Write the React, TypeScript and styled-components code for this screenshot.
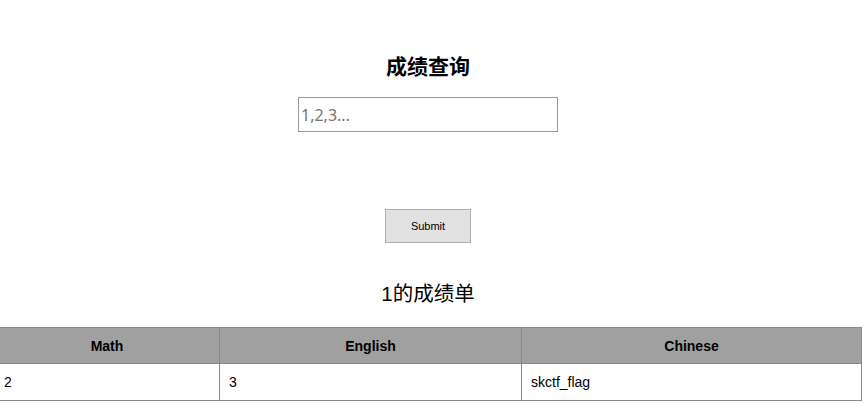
import React from "react";
import styled, { createGlobalStyle } from "styled-components";

const GlobalStyle = createGlobalStyle`
  body {
    margin: 0;
    background: #fff;
    font-family: "Liberation Sans", Arial, "Noto Sans CJK SC", sans-serif;
    color: #000;
    overflow: hidden;
  }
`;

const Page = styled.div`
  display: flex;
  flex-direction: column;
  align-items: center;
  padding-right: 8px;
`;

const Title = styled.h1`
  margin: 53px 0 0;
  height: 28px;
  line-height: 28px;
  font-size: 21px;
  font-weight: bold;
  font-family: "Liberation Sans", "Noto Sans CJK SC", sans-serif;
`;

const QueryInput = styled.input`
  margin-top: 16px;
  width: 260px;
  height: 35px;
  box-sizing: border-box;
  border: 1px solid #999;
  padding: 0 2px;
  font-family: "Noto Sans", sans-serif;
  font-size: 16px;
  outline: none;

  &::placeholder {
    color: #757575;
  }
`;

const SubmitButton = styled.button`
  margin-top: 77px;
  width: 86px;
  height: 34px;
  background: #e1e1e1;
  border: 1px solid #adadad;
  font-family: "Liberation Sans", Arial, sans-serif;
  font-size: 11px;
  color: #000;
`;

const ResultTitle = styled.h2`
  margin: 37px 0 0;
  height: 28px;
  line-height: 28px;
  font-size: 20.5px;
  font-weight: normal;
  font-family: "Liberation Sans", "Noto Sans CJK SC", sans-serif;
`;

const Table = styled.table`
  margin: 19px 0 0 -6px;
  align-self: flex-start;
  width: 867px;
  border-collapse: collapse;
  table-layout: fixed;
  font-size: 14px;
`;

const HeadCell = styled.th<{ $w: number }>`
  box-sizing: border-box;
  width: ${(p) => p.$w}px;
  height: 36px;
  padding: 0 9px;
  background: #a0a0a0;
  border: 1px solid #8a8a8a;
  font-weight: bold;
  text-align: center;
`;

const Cell = styled.td`
  height: 36px;
  padding: 0 9px;
  border: 1px solid #8a8a8a;
  text-align: left;
`;

const columns = [
  { name: "Math", width: 225 },
  { name: "English", width: 302 },
  { name: "Chinese", width: 340 },
];

const scores = ["2", "3", "skctf_flag"];

export default function App() {
  return (
    <>
      <GlobalStyle />
      <Page>
        <Title>成绩查询</Title>
        <QueryInput placeholder="1,2,3..." />
        <SubmitButton>Submit</SubmitButton>
        <ResultTitle>1的成绩单</ResultTitle>
        <Table>
          <thead>
            <tr>
              {columns.map((c) => (
                <HeadCell key={c.name} $w={c.width}>
                  {c.name}
                </HeadCell>
              ))}
            </tr>
          </thead>
          <tbody>
            <tr>
              {scores.map((s, i) => (
                <Cell key={i}>{s}</Cell>
              ))}
            </tr>
          </tbody>
        </Table>
      </Page>
    </>
  );
}
